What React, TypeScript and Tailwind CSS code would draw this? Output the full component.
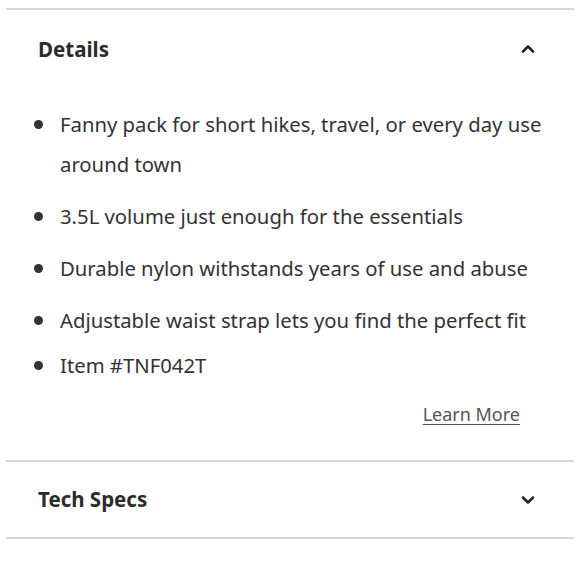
import { ChevronDown, ChevronUp } from "lucide-react";

const details = [
  "Fanny pack for short hikes, travel, or every day use around town",
  "3.5L volume just enough for the essentials",
  "Durable nylon withstands years of use and abuse",
  "Adjustable waist strap lets you find the perfect fit",
  "Item #TNF042T",
];

export default function App() {
  return (
    <div
      className="w-[580px] h-[580px] bg-white px-[6px] pt-[8px] text-[#333]"
      style={{ fontFamily: '"Noto Sans", "Open Sans", sans-serif' }}
    >
      {/* Details */}
      <section className="border-t-2 border-[#d7d7d7]">
        <button
          type="button"
          className="w-full h-[78px] flex items-center justify-between pl-[32px] pr-[36px]"
        >
          <span className="text-[20.5px] font-bold text-[#2b2b2b]">Details</span>
          <ChevronUp className="w-[20px] h-[20px] text-[#222]" strokeWidth={3} />
        </button>

        <ul className="pt-[16px] pl-[28px] pr-[20px]">
          {details.map((item, i) => (
            <li
              key={item}
              className={
                i === 0
                  ? "flex text-[20.3px] leading-[40px]"
                  : i === details.length - 1
                  ? "flex text-[20.3px] leading-[40px] mt-[5px]"
                  : "flex text-[20.3px] leading-[40px] mt-[12px]"
              }
            >
              <span className="w-[26px] shrink-0 flex justify-start pt-[16px]">
                <span className="block w-[9px] h-[9px] rounded-full bg-[#333]" />
              </span>
              <span>{item}</span>
            </li>
          ))}
        </ul>

        <div className="flex justify-end pr-[54px] pt-[17px] pb-[34px]">
          <a
            href="#"
            className="text-[18px] leading-[24px] text-[#555] underline underline-offset-[3px]"
          >
            Learn More
          </a>
        </div>
      </section>

      {/* Tech Specs */}
      <section className="border-t-2 border-b-2 border-[#d7d7d7]">
        <button
          type="button"
          className="w-full h-[75px] flex items-center justify-between pl-[32px] pr-[36px]"
        >
          <span className="text-[20.5px] font-bold text-[#2b2b2b]">Tech Specs</span>
          <ChevronDown className="w-[20px] h-[20px] text-[#222]" strokeWidth={3} />
        </button>
      </section>
    </div>
  );
}
